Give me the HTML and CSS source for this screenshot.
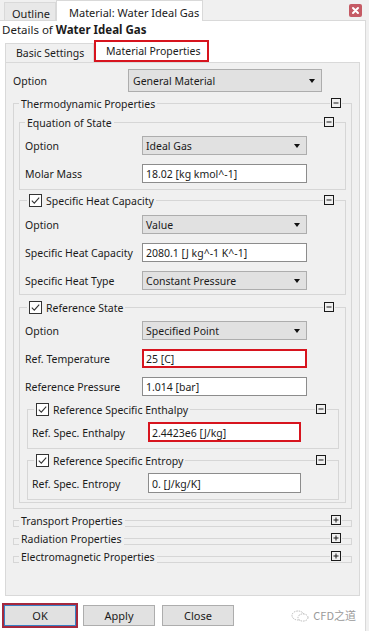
FILE: index.html
```html
<!DOCTYPE html>
<html>
<head>
<meta charset="utf-8">
<link rel="stylesheet" href="styles.css">
</head>
<body>
<div class="topbar">
  <div class="tab">Outline</div>
  <div class="tab active">Material: Water Ideal Gas</div>
  <div class="close"><svg width="13" height="13" viewBox="0 0 13 13"><rect x="0" y="0" width="13" height="13" rx="2" fill="#c55a64"/><path d="M4 4L9 9M9 4L4 9" stroke="#fff" stroke-width="2" stroke-linecap="round"/></svg></div>
</div>
<div class="window">
  <div class="details">Details of&nbsp;<b>Water Ideal Gas</b></div>
  <div class="subtabs">
    <div class="subtab">Basic Settings</div>
    <div class="subtab sel">Material Properties</div>
  </div>
  <div class="panel">
    <div class="toprow">
      <span class="lbl">Option</span>
      <div class="combo big"><span>General Material</span><i class="arrow"></i></div>
    </div>

    <div class="group g-thermo">
      <div class="ghead"><span class="gtitle"><span class="t">Thermodynamic Properties</span></span><svg class="tog" width="10" height="10" viewBox="0 0 10 10"><rect x=".5" y=".5" width="9" height="9" fill="#f0f0f0" stroke="#1a1a1a"/><path d="M2.5 5h5" stroke="#1a1a1a"/></svg></div>

      <div class="group g-sub g-eos">
        <div class="ghead"><span class="gtitle"><span class="t">Equation of State</span></span><svg class="tog" width="10" height="10" viewBox="0 0 10 10"><rect x=".5" y=".5" width="9" height="9" fill="#f0f0f0" stroke="#1a1a1a"/><path d="M2.5 5h5" stroke="#1a1a1a"/></svg></div>
        <div class="rows r-eos">
          <span class="lbl">Option</span>
          <div class="combo"><span>Ideal Gas</span><i class="arrow"></i></div>
          <span class="lbl">Molar Mass</span>
          <div class="input"><span>18.02 [kg kmol^-1]</span></div>
        </div>
      </div>

      <div class="group g-sub g-sh">
        <div class="ghead chk"><span class="gtitle"><svg class="cb" width="13" height="13" viewBox="0 0 13 13"><rect x=".5" y=".5" width="12" height="12" fill="#fff" stroke="#333"/><path d="M2.8 6.6L5.3 9.1L10.2 3.6" fill="none" stroke="#333" stroke-width="1.1"/></svg><span class="t">Specific Heat Capacity</span></span><svg class="tog" width="10" height="10" viewBox="0 0 10 10"><rect x=".5" y=".5" width="9" height="9" fill="#f0f0f0" stroke="#1a1a1a"/><path d="M2.5 5h5" stroke="#1a1a1a"/></svg></div>
        <div class="rows r-sh">
          <span class="lbl">Option</span>
          <div class="combo"><span>Value</span><i class="arrow"></i></div>
          <span class="lbl">Specific Heat Capacity</span>
          <div class="input"><span>2080.1 [J kg^-1 K^-1]</span></div>
          <span class="lbl">Specific Heat Type</span>
          <div class="combo"><span>Constant Pressure</span><i class="arrow"></i></div>
        </div>
      </div>

      <div class="group g-sub g-rs">
        <div class="ghead chk"><span class="gtitle"><svg class="cb" width="13" height="13" viewBox="0 0 13 13"><rect x=".5" y=".5" width="12" height="12" fill="#fff" stroke="#333"/><path d="M2.8 6.6L5.3 9.1L10.2 3.6" fill="none" stroke="#333" stroke-width="1.1"/></svg><span class="t">Reference State</span></span><svg class="tog" width="10" height="10" viewBox="0 0 10 10"><rect x=".5" y=".5" width="9" height="9" fill="#f0f0f0" stroke="#1a1a1a"/><path d="M2.5 5h5" stroke="#1a1a1a"/></svg></div>
        <div class="rows r-rs">
          <span class="lbl">Option</span>
          <div class="combo"><span>Specified Point</span><i class="arrow"></i></div>
          <span class="lbl">Ref. Temperature</span>
          <div class="input hl"><span>25 [C]</span></div>
          <span class="lbl">Reference Pressure</span>
          <div class="input"><span>1.014 [bar]</span></div>
        </div>

        <div class="group g-inner g-enth">
          <div class="ghead chk"><span class="gtitle"><svg class="cb" width="13" height="13" viewBox="0 0 13 13"><rect x=".5" y=".5" width="12" height="12" fill="#fff" stroke="#333"/><path d="M2.8 6.6L5.3 9.1L10.2 3.6" fill="none" stroke="#333" stroke-width="1.1"/></svg><span class="t">Reference Specific Enthalpy</span></span><svg class="tog" width="10" height="10" viewBox="0 0 10 10"><rect x=".5" y=".5" width="9" height="9" fill="#f0f0f0" stroke="#1a1a1a"/><path d="M2.5 5h5" stroke="#1a1a1a"/></svg></div>
          <div class="rows narrow">
            <span class="lbl">Ref. Spec. Enthalpy</span>
            <div class="input hl"><span>2.4423e6 [J/kg]</span></div>
          </div>
        </div>

        <div class="group g-inner g-entr">
          <div class="ghead chk"><span class="gtitle"><svg class="cb" width="13" height="13" viewBox="0 0 13 13"><rect x=".5" y=".5" width="12" height="12" fill="#fff" stroke="#333"/><path d="M2.8 6.6L5.3 9.1L10.2 3.6" fill="none" stroke="#333" stroke-width="1.1"/></svg><span class="t">Reference Specific Entropy</span></span><svg class="tog" width="10" height="10" viewBox="0 0 10 10"><rect x=".5" y=".5" width="9" height="9" fill="#f0f0f0" stroke="#1a1a1a"/><path d="M2.5 5h5" stroke="#1a1a1a"/></svg></div>
          <div class="rows narrow">
            <span class="lbl">Ref. Spec. Entropy</span>
            <div class="input"><span>0. [J/kg/K]</span></div>
          </div>
        </div>
      </div>
    </div>

    <div class="group collapsed">
      <div class="ghead"><span class="gtitle"><span class="t">Transport Properties</span></span><svg class="tog" width="10" height="10" viewBox="0 0 10 10"><rect x=".5" y=".5" width="9" height="9" fill="#f0f0f0" stroke="#1a1a1a"/><path d="M2.5 5h5M5 2.5v5" stroke="#1a1a1a"/></svg></div>
    </div>
    <div class="group collapsed">
      <div class="ghead"><span class="gtitle"><span class="t">Radiation Properties</span></span><svg class="tog" width="10" height="10" viewBox="0 0 10 10"><rect x=".5" y=".5" width="9" height="9" fill="#f0f0f0" stroke="#1a1a1a"/><path d="M2.5 5h5M5 2.5v5" stroke="#1a1a1a"/></svg></div>
    </div>
    <div class="group collapsed">
      <div class="ghead"><span class="gtitle"><span class="t">Electromagnetic Properties</span></span><svg class="tog" width="10" height="10" viewBox="0 0 10 10"><rect x=".5" y=".5" width="9" height="9" fill="#f0f0f0" stroke="#1a1a1a"/><path d="M2.5 5h5M5 2.5v5" stroke="#1a1a1a"/></svg></div>
    </div>
  </div>

  <div class="buttons">
    <div class="btn ok">OK</div>
    <div class="btn">Apply</div>
    <div class="btn">Close</div>
    <div class="wm">
      <svg width="18" height="12" viewBox="0 0 18 12"><ellipse cx="7" cy="5.5" rx="6" ry="4.5" fill="none" stroke="#b8b8b8" stroke-dasharray="1.5 1"/><ellipse cx="12" cy="7.5" rx="5" ry="3.6" fill="#fff" stroke="#b8b8b8" stroke-dasharray="1.5 1"/></svg>
      <span>CFD之道</span>
    </div>
  </div>
</div>
</body>
</html>
```

FILE: styles.css
```css
* { box-sizing: border-box; }
html, body { margin: 0; padding: 0; }
body {
  width: 369px;
  height: 631px;
  overflow: hidden;
  background: #f0f0f0;
  font-family: "Noto Sans", "Open Sans", sans-serif;
  font-size: 10.5px;
  line-height: 1;
  color: #1b1b1b;
}

/* top document tabs */
.topbar {
  width: 366px;
  height: 21px;
  border-bottom: 1px solid #d9d9d9;
  display: flex;
  align-items: flex-end;
  padding-left: 4px;
}
.tab {
  height: 18px;
  width: 52px;
  border: 1px solid #d9d9d9;
  border-bottom: none;
  background: #e8e8e8;
  padding: 3px 0 0 7px;
  display: flex;
  align-items: center;
  font-size: 11px;
}
.tab.active {
  height: 21px;
  width: 147px;
  margin-bottom: -1px;
  background: #fff;
  padding-left: 12px;
}
.close {
  margin-left: auto;
  margin-right: 4px;
  align-self: flex-start;
  margin-top: 4px;
  height: 13px;
}
.close svg { display: block; }

/* details window */
.window {
  width: 366px;
  height: 610px;
  background: #fff;
  border-right: 1px solid #d9d9d9;
}
.details {
  height: 19px;
  padding: 0 0 2px 2px;
  font-size: 11.5px;
  display: flex;
  align-items: center;
}
.subtabs {
  display: flex;
  align-items: flex-end;
  height: 22px;
  margin-left: 5px;
}
.subtab {
  height: 19px;
  width: 89px;
  border: 1px solid #d9d9d9;
  border-bottom: none;
  background: #f0f0f0;
  padding-left: 10px;
  display: flex;
  align-items: center;
}
.subtab.sel {
  height: 22px;
  width: 115px;
  border: 2px solid #d7141e;
  background: #fff;
}

.panel {
  margin-left: 5px;
  width: 355px;
  height: 534px;
  border: 1px solid #d9d9d9;
  background: #f0f0f0;
  padding: 6px 7px 0;
}
.toprow {
  display: grid;
  grid-template-columns: 115px 194px;
  align-items: center;
  height: 23px;
}

/* text nudged 1px down, as in the native widgets */
.lbl, .combo span, .input span, .gtitle .t { padding-top: 2px; }

/* controls */
.combo {
  height: 19px;
  background: #e1e1e1;
  border: 1px solid #adadad;
  display: flex;
  align-items: center;
  justify-content: space-between;
  padding: 0 6px 0 3px;
}
.combo.big { height: 23px; padding-left: 4px; }
.arrow {
  width: 0;
  height: 0;
  border-left: 3.5px solid transparent;
  border-right: 3.5px solid transparent;
  border-top: 4px solid #111;
}
.input {
  height: 19px;
  background: #fff;
  border: 1px solid #8c8c8c;
  display: flex;
  align-items: center;
  padding-left: 3px;
}
.input.hl {
  border: 2px solid #d7141e;
  padding-left: 2px;
}

/* group boxes */
.group {
  border: 1px solid #d6d6d6;
}
.ghead {
  display: flex;
  justify-content: space-between;
  align-items: center;
  height: 14px;
  margin-top: -8px;
  padding: 0 10px 0 5px;
}
.gtitle {
  background: #f0f0f0;
  padding: 0 2px;
  display: flex;
  align-items: center;
  gap: 4px;
  height: 14px;
}
.tog { display: block; box-shadow: 0 0 0 1px #f0f0f0; background: #f0f0f0; }
.cb { display: block; }

.g-thermo { margin-top: 11px; padding-bottom: 5px; }
.g-sub { margin: 0 5px; }
.g-sub .ghead { padding-right: 11px; }
.g-sub .ghead.chk { padding-left: 7px; }
.g-eos { margin-top: 12px; }
.g-sh { margin-top: 10px; }
.g-rs { margin-top: 12px; padding-bottom: 2px; }
.g-inner { margin: 0 6px 0 7px; }
.g-inner .ghead.chk { padding-left: 6px; padding-right: 12px; }
.g-enth { margin-top: 13px; }
.g-entr { margin-top: 11px; }

.rows {
  display: grid;
  grid-template-columns: 117px 165px;
  grid-auto-rows: 19px;
  row-gap: 9px;
  align-items: center;
  padding: 7px 0 6px 5px;
}
.r-sh { padding: 8px 0 4px 5px; }
.r-rs { padding: 7px 0 0 5px; }
.rows.narrow {
  grid-template-columns: 116px 153px;
  grid-auto-rows: 20px;
  padding: 6px 0 6px 4px;
}
.rows.narrow .input { height: 20px; }

.collapsed { margin-top: 11px; }
.collapsed .ghead { margin-bottom: -1px; }

/* buttons */
.buttons {
  display: flex;
  align-items: center;
  gap: 7px;
  margin-top: 9px;
  padding-left: 4px;
  height: 21px;
}
.btn {
  width: 72px;
  height: 21px;
  border: 1px solid #adadad;
  background: #e1e1e1;
  display: flex;
  align-items: center;
  justify-content: center;
  font-size: 11px;
}
.btn.ok {
  border: 1px solid #3a7fc4;
  outline: 2px solid #a5283d;
}
.wm {
  margin-left: auto;
  margin-right: 9px;
  display: flex;
  align-items: center;
  gap: 4px;
  color: #9a9a9a;
  font-family: "Noto Sans CJK SC", "Noto Sans", sans-serif;
  font-size: 11px;
}
.wm svg { display: block; }
```
